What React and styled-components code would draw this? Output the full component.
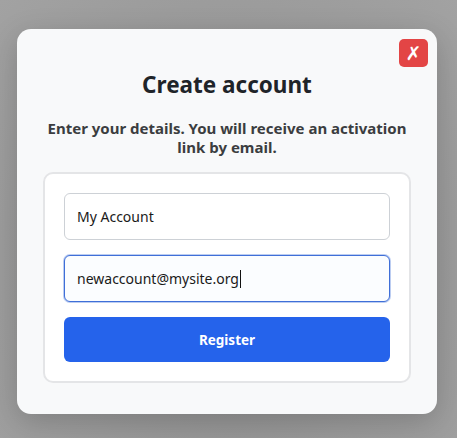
import React from 'react';
import styled, { createGlobalStyle } from 'styled-components';

const GlobalStyle = createGlobalStyle`
  html, body {
    margin: 0;
    padding: 0;
    background: #9d9d9d;
    font-family: 'Noto Sans', 'Open Sans', 'Liberation Sans', sans-serif;
  }
`;

const Backdrop = styled.div`
  width: 457px;
  height: 438px;
  padding-top: 29px;
  box-sizing: border-box;
  background: radial-gradient(ellipse at 50% 60%, #8c8c8c 0%, #9a9a9a 60%, #a2a2a2 100%);
`;

const Modal = styled.section`
  position: relative;
  width: 420px;
  margin-left: 17px;
  box-sizing: border-box;
  padding: 41px 26px 31px;
  background: #f8f9fa;
  border-radius: 14px;
  box-shadow: 0 8px 30px rgba(0, 0, 0, 0.18);
  display: flex;
  flex-direction: column;
  align-items: stretch;
`;

const CloseButton = styled.button`
  position: absolute;
  top: 10px;
  right: 9px;
  width: 29px;
  height: 28px;
  border: none;
  border-radius: 5px;
  background: #e34545;
  color: #fff;
  font-family: 'DejaVu Sans', sans-serif;
  font-size: 19px;
  font-weight: bold;
  line-height: 28px;
  padding: 0;
  display: flex;
  align-items: center;
  justify-content: center;
`;

const Title = styled.h2`
  margin: 0;
  text-align: center;
  font-size: 22.5px;
  line-height: 30px;
  font-weight: 700;
  color: #1f2429;
`;

const Subtitle = styled.p`
  margin: 19px 0 15px;
  text-align: center;
  font-size: 15px;
  line-height: 19px;
  font-weight: 700;
  color: #3b3d40;
`;

const Card = styled.form`
  background: #fff;
  border: 2px solid #e4e5e7;
  border-radius: 10px;
  padding: 19px;
  display: flex;
  flex-direction: column;
  gap: 15px;
`;

const Field = styled.div`
  position: relative;
  display: flex;
`;

const Input = styled.input`
  flex: 1;
  height: 47px;
  box-sizing: border-box;
  border: 1px solid ${(p) => (p.$active ? '#3f6fd8' : '#cdd1d6')};
  box-shadow: ${(p) => (p.$active ? '0 0 0 1px rgba(63,111,216,0.35)' : 'none')};
  background: ${(p) => (p.$active ? '#fbfdff' : '#fff')};
  border-radius: 6px;
  padding: 0 12px;
  font-family: inherit;
  font-size: 14px;
  color: #1a1a1a;
  outline: none;
  caret-color: transparent;
`;

const Caret = styled.span`
  position: absolute;
  left: 176px;
  top: 15px;
  width: 1px;
  height: 18px;
  background: #111;
`;

const Submit = styled.button`
  height: 45px;
  border: none;
  border-radius: 6px;
  background: #2563eb;
  color: #fff;
  font-family: inherit;
  font-size: 13.5px;
  font-weight: 700;
`;

function App() {
  return (
    <>
      <GlobalStyle />
      <Backdrop>
        <Modal>
          <CloseButton type='button'>✗</CloseButton>
          <Title>Create account</Title>
          <Subtitle>Enter your details. You will receive an activation link by email.</Subtitle>
          <Card onSubmit={(e) => e.preventDefault()}>
            <Field>
              <Input type='text' defaultValue='My Account' />
            </Field>
            <Field>
              <Input type='email' defaultValue='newaccount@mysite.org' $active />
              <Caret />
            </Field>
            <Submit type='submit'>Register</Submit>
          </Card>
        </Modal>
      </Backdrop>
    </>
  );
}

export default App;
